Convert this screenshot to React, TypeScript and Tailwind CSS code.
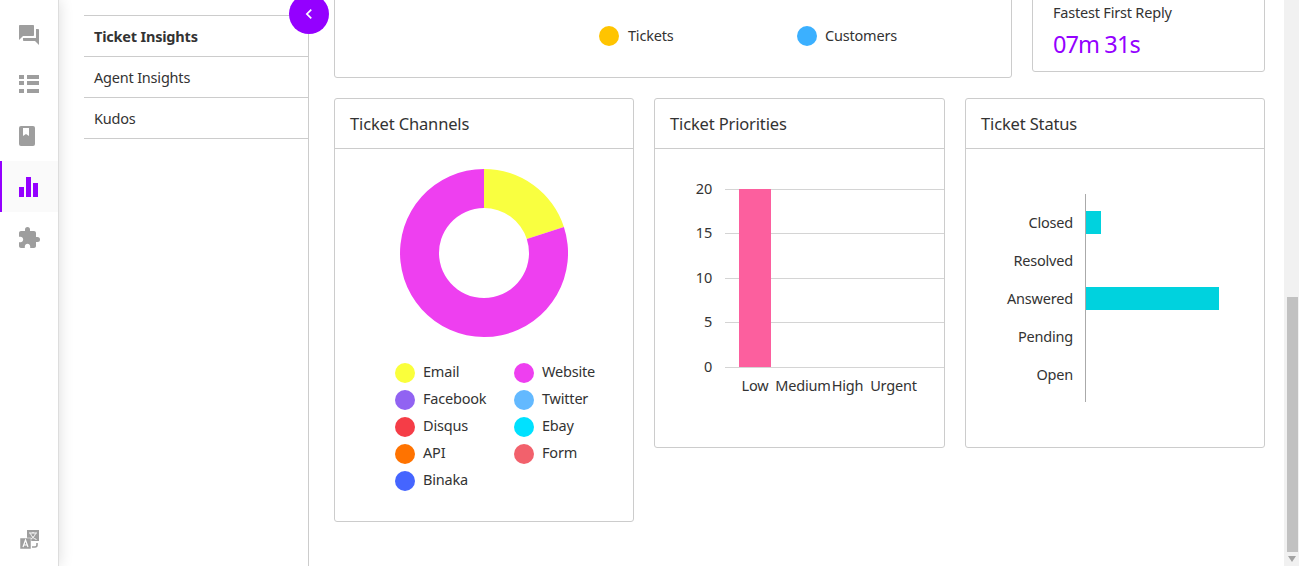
import { MdForum, MdExtension, MdChevronLeft } from 'react-icons/md'
import type { ReactNode } from 'react'

const channels = [
  { label: 'Email', color: 'bg-[#faff3b]' },
  { label: 'Website', color: 'bg-[#ee3ff0]' },
  { label: 'Facebook', color: 'bg-[#9163f2]' },
  { label: 'Twitter', color: 'bg-[#63b9ff]' },
  { label: 'Disqus', color: 'bg-[#f53d47]' },
  { label: 'Ebay', color: 'bg-[#00e1ff]' },
  { label: 'API', color: 'bg-[#ff7300]' },
  { label: 'Form', color: 'bg-[#f2616c]' },
  { label: 'Binaka', color: 'bg-[#4565ff]' },
]

function Card({ title, className, children }: { title: string; className: string; children: ReactNode }) {
  return (
    <div className={`rounded-[3px] border border-[#ccc] bg-white ${className}`}>
      <div className="flex h-[50px] items-center border-b border-[#ccc] px-[15px] pt-[2px] text-[16.5px] tracking-[-0.15px]">{title}</div>
      {children}
    </div>
  )
}

function Rail() {
  return (
    <div className="relative z-10 flex w-[59px] shrink-0 flex-col border-r border-[#ddd] bg-white text-[#9e9e9e] shadow-[0_0_14px_rgba(0,0,0,0.14)]">
      <div className="flex h-[60px] items-center justify-center pt-[9px]">
        <MdForum size={24} />
      </div>
      <div className="flex h-[48px] items-center justify-center">
        <svg width="20" height="18" viewBox="0 0 20 18" fill="currentColor">
          <rect x="0" y="0" width="5" height="4" />
          <rect x="8" y="0" width="12" height="4" />
          <rect x="0" y="6" width="5" height="4" />
          <rect x="8" y="6" width="12" height="4" />
          <rect x="0" y="14" width="5" height="4" />
          <rect x="8" y="14" width="12" height="4" />
        </svg>
      </div>
      <div className="flex h-[53px] items-center justify-center pr-[4px] pt-[3px]">
        <svg width="16" height="20" viewBox="0 0 16 20">
          <path fill="currentColor" d="M2 0h12a2 2 0 0 1 2 2v16a2 2 0 0 1-2 2H2a2 2 0 0 1-2-2V2a2 2 0 0 1 2-2z" />
          <path fill="#fff" d="M4 2h6v8L7 8l-3 2z" />
        </svg>
      </div>
      <div className="flex h-[51px] items-center justify-center border-l-2 border-[#9400ff] bg-[#fafafa] pr-[3px] pt-[1px]">
        <svg width="19" height="20" viewBox="0 0 19 20" fill="#9400ff">
          <rect x="0" y="10" width="5" height="10" />
          <rect x="7" y="0" width="5" height="20" />
          <rect x="14" y="6" width="5" height="14" />
        </svg>
      </div>
      <div className="flex h-[52px] items-center justify-center">
        <MdExtension size={24} />
      </div>
      <div className="mt-auto flex h-[36px] items-start justify-center pl-[2px]">
        <svg width="20" height="19" viewBox="0 0 20 19">
          <rect x="7" y="0" width="12" height="11" fill="currentColor" />
          <path d="M9 3h8M13 2v1M10.5 3.5c1 3 3 5 6 6M15.5 3.5c-1 3-3 5-6 6" stroke="#fff" strokeWidth="1" fill="none" />
          <rect x="0" y="8" width="11" height="11" fill="currentColor" stroke="#fff" strokeWidth="0.5" />
          <path d="M3 17l2.5-7 2.5 7M3.8 15h3.4" stroke="#fff" strokeWidth="1.2" fill="none" />
          <path d="M12 17h3a2 2 0 0 0 2-2v-2" stroke="currentColor" strokeWidth="1.6" fill="none" />
        </svg>
      </div>
    </div>
  )
}

function SubNav() {
  return (
    <div className="relative w-[250px] shrink-0 border-r border-[#ccc] pl-[25px] pt-[15px]">
      <div className="border-t border-[#ccc]">
        <div className="flex h-[41px] items-center border-b border-[#ccc] pl-[10px] pt-[2px] font-bold">Ticket Insights</div>
        <div className="flex h-[41px] items-center border-b border-[#ccc] pl-[10px] pt-[2px]">Agent Insights</div>
        <div className="flex h-[41px] items-center border-b border-[#ccc] pl-[10px] pt-[2px]">Kudos</div>
      </div>
      <button className="absolute -right-[21px] -top-[6px] z-10 flex h-10 w-10 items-center justify-center rounded-full bg-[#9400ff] text-white">
        <MdChevronLeft size={20} />
      </button>
    </div>
  )
}

function TopRow() {
  return (
    <div className="flex h-[78px] items-start gap-5">
      <div className="-mt-[22px] flex h-[100px] w-[678px] items-start rounded-[3px] border border-[#ccc] pl-[264px] pt-[46px]">
        <div className="flex w-[198px] items-center gap-[9px]">
          <span className="h-5 w-5 rounded-full bg-[#ffc400]" />
          <span>Tickets</span>
        </div>
        <div className="flex items-center gap-[8px]">
          <span className="h-5 w-5 rounded-full bg-[#3bb0ff]" />
          <span>Customers</span>
        </div>
      </div>
      <div className="-mt-[22px] h-[94px] w-[233px] rounded-[3px] border border-[#ccc] pl-5 pt-[21px]">
        <div className="leading-[24px]">Fastest First Reply</div>
        <div className="mt-[4px] text-[23.5px] leading-[32px] tracking-[-0.9px] text-[#9400ff]">07m 31s</div>
      </div>
    </div>
  )
}

function ChannelsCard() {
  return (
    <Card title="Ticket Channels" className="h-[424px] w-[300px] shrink-0">
      <svg className="mx-auto mt-5" width="168" height="168" viewBox="0 0 168 168">
        <path fill="#f9ff40" d="M84 0A84 84 0 0 1 163.9 58L126.8 70.1A45 45 0 0 0 84 39Z" />
        <path fill="#ee3ff0" d="M163.9 58A84 84 0 1 1 84 0L84 39A45 45 0 1 0 126.8 70.1Z" />
      </svg>
      <div className="mt-[22px] grid grid-cols-[119px_1fr] pl-[60px]">
        {channels.map((c) => (
          <div key={c.label} className="flex h-[27px] items-center gap-2">
            <span className={`h-5 w-5 rounded-full ${c.color}`} />
            <span className="-translate-y-[1px]">{c.label}</span>
          </div>
        ))}
      </div>
    </Card>
  )
}

function PrioritiesCard() {
  const grid = [
    { y: 40, label: '20' },
    { y: 84, label: '15' },
    { y: 129, label: '10' },
    { y: 173, label: '5' },
    { y: 218, label: '0' },
  ]
  const cats = [
    { x: 100, label: 'Low' },
    { x: 148, label: 'Medium' },
    { x: 192.5, label: 'High' },
    { x: 238.5, label: 'Urgent' },
  ]
  return (
    <Card title="Ticket Priorities" className="h-[350px] w-[291px] shrink-0">
      <svg width="289" height="298" viewBox="0 0 289 298" fill="#333" fontSize="14.5">
        {grid.map((g) => (
          <g key={g.y}>
            <line x1="70" x2="289" y1={g.y + 0.5} y2={g.y + 0.5} stroke="#d4d4d4" />
            <text x="57" y={g.y + 5} textAnchor="end">{g.label}</text>
          </g>
        ))}
        <rect x="84" y="40" width="32" height="178" fill="#fc5f9e" />
        {cats.map((c) => (
          <text key={c.label} x={c.x} y="242" textAnchor="middle">{c.label}</text>
        ))}
      </svg>
    </Card>
  )
}

function StatusCard() {
  const rows = [
    { y: 79, label: 'Closed' },
    { y: 117, label: 'Resolved' },
    { y: 155, label: 'Answered' },
    { y: 193, label: 'Pending' },
    { y: 231, label: 'Open' },
  ]
  return (
    <Card title="Ticket Status" className="h-[350px] w-[300px] shrink-0">
      <svg width="298" height="298" viewBox="0 0 298 298" fill="#333" fontSize="14.5">
        {rows.map((r) => (
          <text key={r.label} x="107" y={r.y} textAnchor="end">{r.label}</text>
        ))}
        <line x1="119.5" x2="119.5" y1="45" y2="253" stroke="#aaa" />
        <rect x="120" y="62" width="15" height="23" fill="#00d2de" />
        <rect x="120" y="138" width="133" height="23" fill="#00d2de" />
      </svg>
    </Card>
  )
}

function Scrollbar() {
  return (
    <div className="flex w-[15px] shrink-0 flex-col items-center justify-end bg-[#f1f1f1]">
      <div className="ml-[1px] h-[255px] w-[11px] bg-[#c1c1c1]" />
      <svg className="my-[4px]" width="8" height="6" viewBox="0 0 8 6">
        <path d="M0 0h8L4 6z" fill="#a3a3a3" />
      </svg>
    </div>
  )
}

export default function App() {
  return (
    <div className="flex h-[566px] overflow-hidden bg-white font-['Noto_Sans',sans-serif] text-[14.5px] tracking-[-0.2px] text-[#333]">
      <Rail />
      <SubNav />
      <main className="min-w-0 flex-1 pl-[25px] pr-[19px]">
        <TopRow />
        <div className="mt-5 flex items-start gap-5">
          <ChannelsCard />
          <PrioritiesCard />
          <StatusCard />
        </div>
      </main>
      <Scrollbar />
    </div>
  )
}
